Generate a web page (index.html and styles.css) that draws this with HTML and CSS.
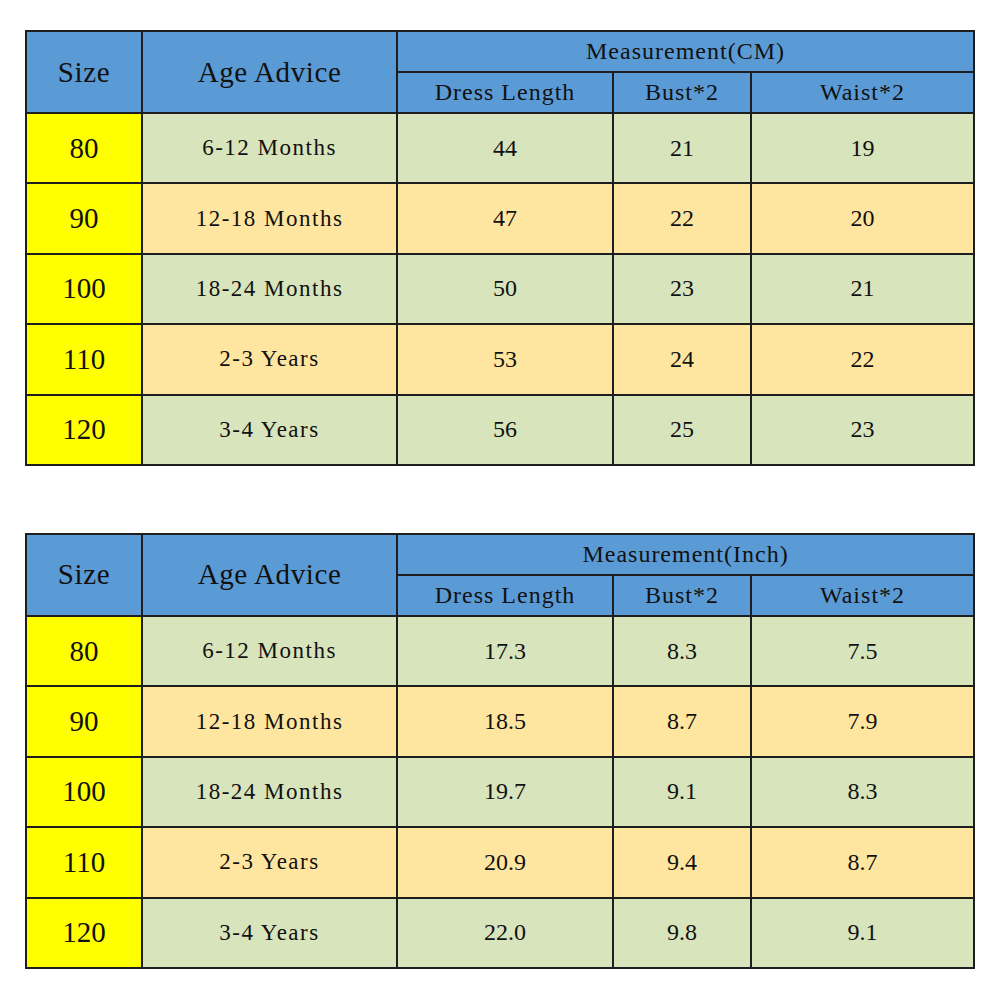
FILE: index.html
```html
<!DOCTYPE html>
<html>
<head>
<meta charset="utf-8">
<link rel="stylesheet" href="styles.css">
</head>
<body>
<div class="page">
<table class="chart">
  <colgroup><col class="c1"><col class="c2"><col class="c3"><col class="c4"><col class="c5"></colgroup>
  <tr class="h1">
    <th rowspan="2" class="big">Size</th>
    <th rowspan="2" class="big">Age Advice</th>
    <th colspan="3" class="sub">Measurement(CM)</th>
  </tr>
  <tr class="h2">
    <th class="sub">Dress Length</th><th class="sub">Bust*2</th><th class="sub">Waist*2</th>
  </tr>
  <tr class="g"><td class="size">80</td><td class="age">6-12 Months</td><td>44</td><td>21</td><td>19</td></tr>
  <tr class="o"><td class="size">90</td><td class="age">12-18 Months</td><td>47</td><td>22</td><td>20</td></tr>
  <tr class="g"><td class="size">100</td><td class="age">18-24 Months</td><td>50</td><td>23</td><td>21</td></tr>
  <tr class="o"><td class="size">110</td><td class="age">2-3 Years</td><td>53</td><td>24</td><td>22</td></tr>
  <tr class="g"><td class="size">120</td><td class="age">3-4 Years</td><td>56</td><td>25</td><td>23</td></tr>
</table>
<table class="chart">
  <colgroup><col class="c1"><col class="c2"><col class="c3"><col class="c4"><col class="c5"></colgroup>
  <tr class="h1">
    <th rowspan="2" class="big">Size</th>
    <th rowspan="2" class="big">Age Advice</th>
    <th colspan="3" class="sub">Measurement(Inch)</th>
  </tr>
  <tr class="h2">
    <th class="sub">Dress Length</th><th class="sub">Bust*2</th><th class="sub">Waist*2</th>
  </tr>
  <tr class="g"><td class="size">80</td><td class="age">6-12 Months</td><td>17.3</td><td>8.3</td><td>7.5</td></tr>
  <tr class="o"><td class="size">90</td><td class="age">12-18 Months</td><td>18.5</td><td>8.7</td><td>7.9</td></tr>
  <tr class="g"><td class="size">100</td><td class="age">18-24 Months</td><td>19.7</td><td>9.1</td><td>8.3</td></tr>
  <tr class="o"><td class="size">110</td><td class="age">2-3 Years</td><td>20.9</td><td>9.4</td><td>8.7</td></tr>
  <tr class="g"><td class="size">120</td><td class="age">3-4 Years</td><td>22.0</td><td>9.8</td><td>9.1</td></tr>
</table>
</div>
</body>
</html>
```
FILE: styles.css
```css
html, body {
  margin: 0;
  padding: 0;
  background: #ffffff;
}
.page {
  padding: 30px 0 0 25px;
  display: flex;
  flex-direction: column;
  gap: 67px;
  font-family: "Liberation Serif", "Times New Roman", serif;
  color: #111;
}
.chart {
  border-collapse: collapse;
  table-layout: fixed;
  width: 950px;
}
.c1 { width: 116px; }
.c2 { width: 255px; }
.c3 { width: 216px; }
.c4 { width: 138px; }
.c5 { width: 223px; }
.chart th, .chart td {
  border: 2px solid #1e1e1e;
  text-align: center;
  vertical-align: middle;
  padding: 0;
  font-weight: normal;
}
.chart th {
  background: #5b9bd5;
}
.h1 th, .h2 th { height: 39px; }
.big {
  font-size: 29px;
  letter-spacing: 0.6px;
}
.sub {
  font-size: 24px;
  letter-spacing: 1px;
}
.chart td {
  height: 68.4px;
  font-size: 24px;
}
.chart td.age {
  font-size: 23px;
  letter-spacing: 1.5px;
}
.g td { background: #d8e4bc; }
.o td { background: #ffe6a0; }
.chart td.size {
  background: #ffff00;
  font-size: 29px;
}
```
